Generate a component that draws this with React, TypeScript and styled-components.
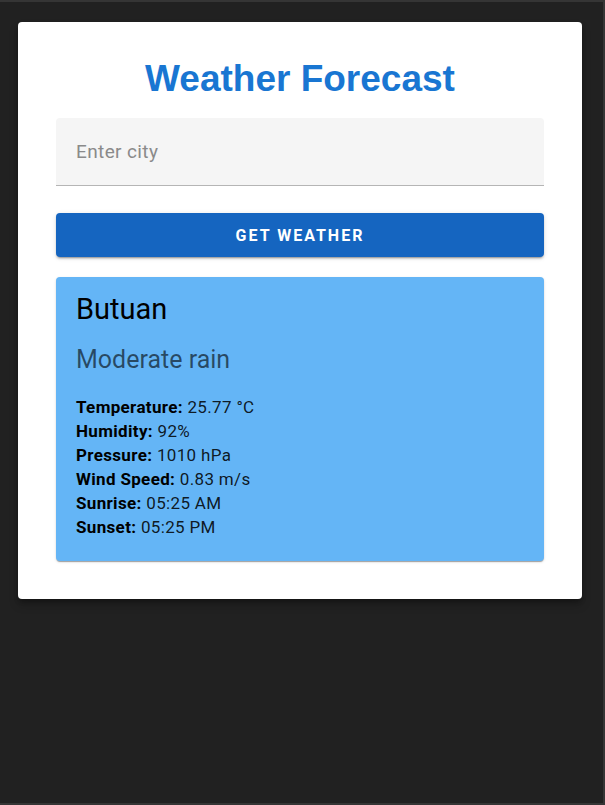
import React from "react";
import styled, { createGlobalStyle } from "styled-components";

const GlobalStyle = createGlobalStyle`
  html, body { margin: 0; padding: 0; background: #212121; }
  * { box-sizing: border-box; }
`;

const Page = styled.div`
  min-height: 100vh;
  background: #212121;
  border-top: 2px solid #353535;
  border-right: 2px solid #353535;
  border-bottom: 2px solid #353535;
  padding: 20px 21px 0 18px;
`;

const Card = styled.div`
  background: #ffffff;
  border-radius: 4px;
  padding: 35px 38px 38px;
  box-shadow: 0 3px 5px -1px rgba(0,0,0,0.3), 0 6px 10px 0 rgba(0,0,0,0.2);
  display: flex;
  flex-direction: column;
`;

const Title = styled.h1`
  margin: 0;
  text-align: center;
  font-family: "Liberation Sans", Arial, sans-serif;
  font-weight: 700;
  font-size: 37px;
  line-height: 43px;
  color: #1976d2;
`;

const Field = styled.div`
  margin-top: 18px;
  height: 68px;
  background: #f5f5f5;
  border-radius: 4px 4px 0 0;
  border-bottom: 1px solid #b5b5b5;
  display: flex;
  align-items: center;
`;

const Input = styled.input`
  width: 100%;
  border: none;
  outline: none;
  background: transparent;
  padding: 0 20px;
  font-family: Roboto, sans-serif;
  font-size: 19px;
  letter-spacing: 0.02em;
  color: #222;
  &::placeholder { color: #8a8a8a; }
`;

const Button = styled.button`
  margin-top: 27px;
  height: 44px;
  border: none;
  border-radius: 4px;
  background: #1565c0;
  color: #ffffff;
  font-family: Roboto, sans-serif;
  font-weight: 700;
  font-size: 16px;
  letter-spacing: 2px;
  text-transform: uppercase;
  box-shadow: 0 3px 1px -2px rgba(0,0,0,0.2), 0 2px 2px 0 rgba(0,0,0,0.14), 0 1px 5px 0 rgba(0,0,0,0.12);
  cursor: pointer;
`;

const Result = styled.div`
  margin-top: 20px;
  background: #64b5f6;
  border-radius: 4px;
  padding: 15px 20px 22px;
  box-shadow: 0 2px 1px -1px rgba(0,0,0,0.2), 0 1px 1px 0 rgba(0,0,0,0.14), 0 1px 3px 0 rgba(0,0,0,0.12);
  font-family: Roboto, sans-serif;
`;

const City = styled.h2`
  margin: 0;
  font-weight: 400;
  font-size: 29px;
  line-height: 34px;
  color: #000;
`;

const Condition = styled.h3`
  margin: 18px 0 0;
  font-weight: 400;
  font-size: 25px;
  line-height: 32px;
  color: rgba(0,0,0,0.6);
`;

const Details = styled.div`
  margin-top: 19px;
`;

const Line = styled.div`
  font-size: 17px;
  line-height: 24px;
  color: rgba(0,0,0,0.87);
  letter-spacing: 0.02em;
  b { font-weight: 700; color: #000; }
`;

const details: [string, string][] = [
  ["Temperature", "25.77 °C"],
  ["Humidity", "92%"],
  ["Pressure", "1010 hPa"],
  ["Wind Speed", "0.83 m/s"],
  ["Sunrise", "05:25 AM"],
  ["Sunset", "05:25 PM"],
];

export default function App() {
  return (
    <>
      <GlobalStyle />
      <Page>
        <Card>
          <Title>Weather Forecast</Title>
          <Field>
            <Input placeholder="Enter city" />
          </Field>
          <Button>Get Weather</Button>
          <Result>
            <City>Butuan</City>
            <Condition>Moderate rain</Condition>
            <Details>
              {details.map(([k, v]) => (
                <Line key={k}>
                  <b>{k}:</b> {v}
                </Line>
              ))}
            </Details>
          </Result>
        </Card>
      </Page>
    </>
  );
}
